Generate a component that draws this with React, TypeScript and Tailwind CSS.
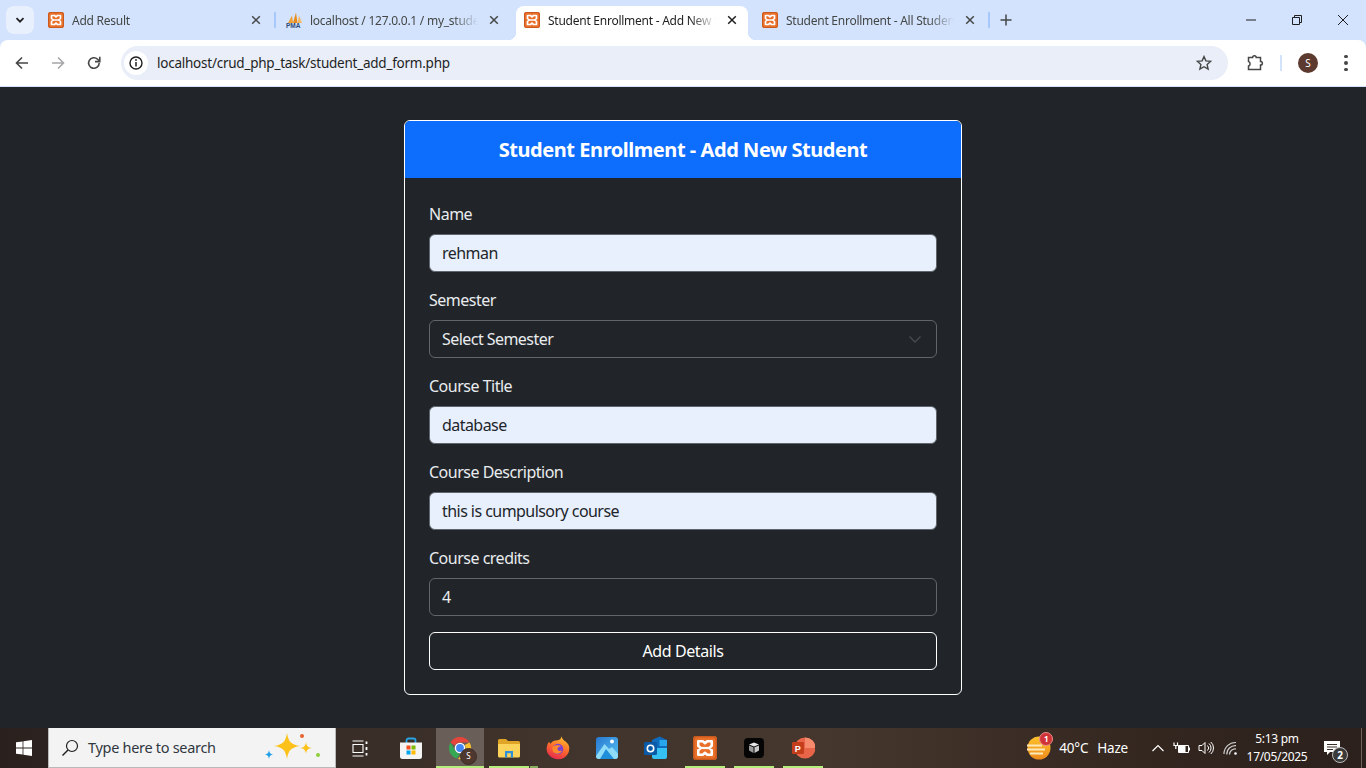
import React from "react";

const FONT = "font-['Noto_Sans','Open_Sans',sans-serif]";

function Xampp({ s = 16 }: { s?: number }) {
  return (
    <svg width={s} height={s} viewBox="0 0 16 16" className="shrink-0">
      <rect x="0" y="0" width="16" height="16" rx="2" fill="#e8702a" />
      <rect x="0.5" y="0.5" width="15" height="15" rx="2" fill="none" stroke="#c9591c" />
      <path d="M3.500 3.500H6.500L8 4.800 9.500 3.500H12.500V6.500L11 8 12.500 9.500V12.500H9.500L8 11.200 6.500 12.500H3.500V9.500L5 8 3.500 6.500Z" fill="none" stroke="#fff" strokeWidth="1.700" strokeLinejoin="round" />
      <path d="M5 8H11" stroke="#fff" strokeWidth="1.500" />
    </svg>
  );
}

function Pma() {
  return (
    <svg width="16" height="16" viewBox="0 0 16 16" className="shrink-0">
      <path d="M2 11 6 3.500 7 11Z" fill="#f0a030" />
      <path d="M7 11 10 0.500 11.500 11Z" fill="#e88a1a" />
      <path d="M11.500 11 13 3.500 16 11Z" fill="#f4b860" />
      <text x="0" y="16" fontSize="6.500" fontWeight="700" fill="#2b4a7a" fontFamily="Liberation Sans">PMA</text>
    </svg>
  );
}

function Close({ dark }: { dark?: boolean }) {
  return (
    <svg width="16" height="16" viewBox="0 0 16 16" className="shrink-0">
      <path d="M4.200 4.200 11.800 11.800M11.800 4.200 4.200 11.800" stroke={dark ? "#1f1f1f" : "#444746"} strokeWidth="1.500" fill="none" />
    </svg>
  );
}

function Tab({ icon, title, active }: { icon: React.ReactNode; title: string; active?: boolean }) {
  return (
    <div className={`relative w-[232px] h-[34px] shrink-0 flex items-center pl-2 pr-2 pb-[6px] rounded-t-lg ${active ? "bg-white" : ""}`}>
      {active && <span className="absolute left-[-8px] bottom-0 w-2 h-2 bg-[radial-gradient(circle_at_0_0,#d3e3fd_8px,#fff_8.5px)]" />}
      {active && <span className="absolute right-[-8px] bottom-0 w-2 h-2 bg-[radial-gradient(circle_at_100%_0,#d3e3fd_8px,#fff_8.5px)]" />}
      {icon}
      <span className={`ml-2 mt-[1px] w-[168px] overflow-hidden whitespace-nowrap text-[12px] leading-4 tracking-[-0.25px] [mask-image:linear-gradient(to_right,#000_85%,transparent_100%)] ${active ? "text-[#1f1f1f]" : "text-[#444746]"}`}>{title}</span>
      <span className="ml-auto"><Close dark={active} /></span>
    </div>
  );
}

function Sep({ hidden }: { hidden?: boolean }) {
  return (
    <div className="w-[6px] h-[34px] shrink-0 flex items-center justify-center pb-[6px]">
      {!hidden && <span className="w-[2px] h-4 bg-[#a8c7fa]" />}
    </div>
  );
}

function TabStrip() {
  return (
    <div className="h-10 bg-[#d3e3fd] flex items-end shrink-0">
      <div className="w-[40px] h-[34px] shrink-0 flex items-start pl-[6px]">
        <div className="w-[28px] h-[28px] rounded-lg bg-[#e8f0fe] flex items-center justify-center">
          <svg width="12" height="12" viewBox="0 0 12 12"><path d="M2.500 4.200 6 7.700 9.500 4.200" stroke="#1f1f1f" strokeWidth="1.700" fill="none" /></svg>
        </div>
      </div>
      <Tab icon={<Xampp />} title="Add Result" />
      <Sep />
      <Tab icon={<Pma />} title="localhost / 127.0.0.1 / my_student_db" />
      <Sep hidden />
      <Tab icon={<Xampp />} title="Student Enrollment - Add New Student" active />
      <Sep hidden />
      <Tab icon={<Xampp />} title="Student Enrollment - All Students" />
      <Sep />
      <div className="h-[34px] w-[20px] flex items-center justify-end shrink-0 pb-[6px]">
        <svg width="12" height="12" viewBox="0 0 12 12"><path d="M6 .5V11.500M.5 6H11.500" stroke="#444746" strokeWidth="1.500" /></svg>
      </div>
      <div className="ml-auto h-10 flex items-center self-start">
        <div className="w-[46px] flex justify-center"><svg width="12" height="12" viewBox="0 0 12 12"><path d="M1 6H11" stroke="#1f1f1f" /></svg></div>
        <div className="w-[46px] flex justify-center"><svg width="12" height="12" viewBox="0 0 12 12"><path d="M1.500 3.500H8.500V10.500H1.500ZM3.500 3.500V1.500H10.500V8.500H8.500" stroke="#1f1f1f" fill="none" /></svg></div>
        <div className="w-[46px] flex justify-center"><svg width="12" height="12" viewBox="0 0 12 12"><path d="M1 1 11 11M11 1 1 11" stroke="#1f1f1f" /></svg></div>
      </div>
    </div>
  );
}

function Toolbar() {
  return (
    <div className="h-[47px] bg-[#d3e3fd] shrink-0">
      <div className="h-[46px] bg-white rounded-t-lg flex items-center">
        <div className="w-[44px] flex justify-center">
          <svg width="16" height="16" viewBox="0 0 16 16"><path d="M14 8H2.500M8 2.500 2.500 8 8 13.500" stroke="#444746" strokeWidth="1.600" fill="none" /></svg>
        </div>
        <div className="w-[28px] flex justify-center">
          <svg width="16" height="16" viewBox="0 0 16 16"><path d="M2 8H13.500M8 2.500 13.500 8 8 13.500" stroke="#a5a7a8" strokeWidth="1.600" fill="none" /></svg>
        </div>
        <div className="w-[44px] flex justify-center">
          <svg width="16" height="16" viewBox="0 0 16 16"><path d="M13.200 8A5.300 5.300 0 1 1 11.600 4.200L13.400 6" stroke="#444746" strokeWidth="1.600" fill="none" /><path d="M13.800 1.800V6.600H9" stroke="#444746" strokeWidth="1.600" fill="none" /></svg>
        </div>
        <div className="ml-[5px] w-[1107px] h-[34px] rounded-full bg-[#e9eef8] flex items-center">
          <div className="ml-[3px] w-[24px] h-[24px] rounded-full bg-white flex items-center justify-center">
            <svg width="16" height="16" viewBox="0 0 16 16"><circle cx="8" cy="8" r="6" stroke="#1f1f1f" strokeWidth="1.400" fill="none" /><path d="M8 7V11.400" stroke="#1f1f1f" strokeWidth="1.500" /><circle cx="8" cy="5" r=".9" fill="#1f1f1f" /></svg>
          </div>
          <span className="ml-[9px] text-[13.5px] text-[#1f1f1f] tracking-[-0.24px]">localhost/crud_php_task/student_add_form.php</span>
          <svg className="ml-auto mr-[16px]" width="16" height="16" viewBox="0 0 16 16"><path d="M8 1.600 9.900 5.900 14.600 6.400 11.100 9.500 12.100 14.100 8 11.700 3.900 14.100 4.900 9.500 1.400 6.400 6.100 5.900Z" stroke="#444746" strokeWidth="1.400" fill="none" /></svg>
        </div>
        <div className="ml-[17px] w-[20px] flex justify-center">
          <svg width="18" height="18" viewBox="0 0 18 18"><path d="M2.500 3.500H6.600C6.600 1 10.200 1 10.200 3.500H14.500V7.400C17 7.400 17 11 14.500 11V15.500H2.500V12C4.600 11.600 4.600 7.800 2.500 7.400Z" stroke="#444746" strokeWidth="1.500" fill="none" /></svg>
        </div>
        <span className="ml-[15px] w-[2px] h-4 bg-[#d3e3fd]" />
        <div className="ml-[16px] w-[20px] h-[20px] rounded-full bg-[#5d3a2f] text-white text-[10px] flex items-center justify-center">S</div>
        <div className="ml-[26px] w-[4px] flex flex-col gap-[3px]">
          <span className="w-[3.5px] h-[3.5px] rounded-full bg-[#444746]" />
          <span className="w-[3.5px] h-[3.5px] rounded-full bg-[#444746]" />
          <span className="w-[3.5px] h-[3.5px] rounded-full bg-[#444746]" />
        </div>
      </div>
    </div>
  );
}

function Field({ label, value, filled, select }: { label: string; value: string; filled?: boolean; select?: boolean }) {
  return (
    <div className="mb-4">
      <div className="h-6 mb-2 text-[16px] leading-6 text-[#e9ecef] tracking-[-0.5px]">{label}</div>
      <div className={`h-[38px] rounded-md border border-[#60666c] px-3 flex items-center text-[16px] tracking-[-0.55px] ${filled ? "bg-[#e8f0fe] text-[#212529]" : "text-[#e9ecef]"}`}>
        <span>{value}</span>
        {select && (
          <svg className="ml-auto mr-[1px]" width="16" height="16" viewBox="0 0 16 16"><path d="M2.500 5.500 8 11l5.500-5.500" stroke="#454a50" strokeWidth="1.400" fill="none" /></svg>
        )}
      </div>
    </div>
  );
}

function Card() {
  return (
    <div className="flex-1 min-h-0 bg-[#212529] flex justify-center pt-[33px]">
      <div className="w-[558px] h-[575px] border border-white rounded-md overflow-hidden">
        <div className="h-[57px] bg-[#0d6efd] flex items-center justify-center text-white text-[20px] font-bold tracking-[-0.45px]">Student Enrollment - Add New Student</div>
        <div className="p-6">
          <Field label="Name" value="rehman" filled />
          <Field label="Semester" value="Select Semester" select />
          <Field label="Course Title" value="database" filled />
          <Field label="Course Description" value="this is cumpulsory course" filled />
          <Field label="Course credits" value="4" />
          <div className="h-[38px] rounded-md border border-white flex items-center justify-center text-[16px] text-white tracking-[-0.4px]">Add Details</div>
        </div>
      </div>
    </div>
  );
}

function ChromeIcon() {
  return (
    <div className="relative w-6 h-6">
      <svg width="24" height="24" viewBox="0 0 24 24">
        <path d="M12 1A11 11 0 0 1 21.500 6.500H12A5.500 5.500 0 0 0 7 9.500L2.500 6.500A11 11 0 0 1 12 1Z" fill="#e5453a" />
        <path d="M2.500 6.500 7.200 14.600A5.500 5.500 0 0 0 12 17.500L9 22.600A11 11 0 0 1 2.500 6.500Z" fill="#36a853" />
        <path d="M21.500 6.500A11 11 0 0 1 10 23L16.800 14.600A5.500 5.500 0 0 0 16.800 9Z" fill="#fbc02d" />
        <circle cx="12" cy="12" r="4.600" fill="#4285f4" stroke="#fff" strokeWidth="1.400" />
      </svg>
      <span className="absolute right-[-5px] bottom-[-5px] w-[17px] h-[17px] rounded-full bg-[#4e372e] border border-[#3a2e28] text-white text-[8px] flex items-center justify-center">S</span>
    </div>
  );
}

function Files() {
  return (
    <svg width="24" height="24" viewBox="0 0 24 24">
      <path d="M1 4.500A1.500 1.500 0 0 1 2.500 3H9L11 5H21.500A1.500 1.500 0 0 1 23 6.500V9H1Z" fill="#e0a526" />
      <path d="M1 8H23V20A1.500 1.500 0 0 1 21.500 21.500H2.500A1.500 1.500 0 0 1 1 20Z" fill="#fcd45c" />
      <path d="M8 21.500V15H16V21.500H13.800V17.200H10.200V21.500Z" fill="#2f8fd8" />
    </svg>
  );
}

function Firefox() {
  return (
    <svg width="24" height="24" viewBox="0 0 24 24">
      <defs>
        <linearGradient id="ff" x1="0.700" y1="0" x2="0.300" y2="1"><stop offset="0" stopColor="#ffc12f" /><stop offset=".5" stopColor="#ff6b2c" /><stop offset="1" stopColor="#e5264f" /></linearGradient>
      </defs>
      <path d="M15.500 .3C16 3 18 4.500 19.600 5.600 22.800 8 23.500 11 23.200 13.500A11.300 10.500 0 1 1 1.200 9.500C1.500 8 2.500 6.500 3.200 5.800 3.500 6.800 4 7.500 4.600 7.800 6 5.500 8 4.500 9.500 4.500 12 4.500 15 4 15.500 .3Z" fill="url(#ff)" />
      <circle cx="12" cy="13" r="5.200" fill="#7b3fd1" />
      <path d="M6.500 11C9 8.500 13 9 15.500 10.500 13.500 10.500 11.500 11 11.500 13 11.500 15 14 15.500 16 14.500 14.500 18.500 9.500 18.500 7.500 16 6.500 15 6.200 13 6.500 11Z" fill="#ff8a2c" />
    </svg>
  );
}

function Photos() {
  return (
    <svg width="24" height="24" viewBox="0 0 24 24">
      <defs>
        <linearGradient id="ph" x1="0" y1="0" x2="1" y2="1"><stop offset="0" stopColor="#2878d0" /><stop offset="1" stopColor="#56c1f2" /></linearGradient>
      </defs>
      <rect x="1" y="1" width="22" height="22" rx="3" fill="url(#ph)" />
      <circle cx="17" cy="5.500" r="2" fill="#fff" />
      <path d="M1 20 9.500 8 14 13 17 11 23 18V20A3 3 0 0 1 20 23H4A3 3 0 0 1 1 20Z" fill="#8fdcf8" />
      <path d="M5 23 11 13 19 23Z" fill="#1f8fdc" />
    </svg>
  );
}

function Outlook() {
  return (
    <svg width="24" height="24" viewBox="0 0 24 24">
      <path d="M8 4 15.500 .5 23 4V12H8Z" fill="#0f6cbd" />
      <path d="M15.500 4H23V10H15.500Z" fill="#28a8ea" />
      <path d="M8 12H23V21A2 2 0 0 1 21 23H10A2 2 0 0 1 8 21Z" fill="#35c1f1" />
      <rect x="0" y="6" width="13" height="13" rx="1.500" fill="#0a5aa8" />
      <circle cx="6.500" cy="12.500" r="3.200" fill="none" stroke="#fff" strokeWidth="1.600" />
    </svg>
  );
}

function Ppt() {
  return (
    <svg width="24" height="24" viewBox="0 0 24 24">
      <circle cx="14" cy="12" r="10.500" fill="#e9654a" />
      <path d="M14 1.500A10.500 10.500 0 0 1 24.500 12H14Z" fill="#f58a6c" />
      <rect x="1" y="6" width="12" height="12" rx="1.200" fill="#c43e1c" />
      <text x="3.800" y="15.500" fontSize="9" fontWeight="700" fill="#fff" fontFamily="Liberation Sans">P</text>
    </svg>
  );
}

function BlackBox() {
  return (
    <svg width="20" height="20" viewBox="0 0 20 20">
      <rect width="20" height="20" rx="4" fill="#050505" />
      <path d="M5 6.500 10 4.500 15 6.500 10 8.500Z" fill="#e8e8e8" />
      <path d="M5 7.500 9.500 9.300V15L5 12.500Z" fill="#9a9a9a" />
      <path d="M15 7.500 10.500 9.300V15L15 12.500Z" fill="#c8c8c8" />
    </svg>
  );
}

function Store() {
  return (
    <svg width="24" height="24" viewBox="0 0 24 24">
      <path d="M7.500 7V4.500A2 2 0 0 1 9.500 2.500H14.500A2 2 0 0 1 16.500 4.500V7" fill="none" stroke="#27a5e6" strokeWidth="1.800" />
      <path d="M1 6.500H23V20.500A2.500 2.500 0 0 1 20.500 23H3.500A2.500 2.500 0 0 1 1 20.500Z" fill="#f4f4f4" />
      <rect x="7.500" y="9.500" width="4" height="4" fill="#f25022" />
      <rect x="12.500" y="9.500" width="4" height="4" fill="#7fba00" />
      <rect x="7.500" y="14.500" width="4" height="4" fill="#00a4ef" />
      <rect x="12.500" y="14.500" width="4" height="4" fill="#ffb900" />
    </svg>
  );
}

function AppSlot({ children, active, line, extra }: { children: React.ReactNode; active?: boolean; line?: boolean; extra?: boolean }) {
  return (
    <div className={`relative w-[48px] mr-[1px] h-10 shrink-0 flex items-center justify-center ${active ? "bg-[#6a5f58]" : ""}`}>
      <div className="mt-[-1px]">{children}</div>
      {line && <span className="absolute left-1 right-1 bottom-0 h-[2px] bg-[#b5ee7c]" />}
      {active && <span className="absolute left-0 right-0 bottom-0 h-[2px] bg-[#b5ee7c]" />}
      {extra && <span className="absolute right-[-5px] bottom-0 w-2 h-[2px] bg-[#86ad60]" />}
    </div>
  );
}

function Taskbar() {
  return (
    <div className="h-10 shrink-0 flex items-center text-white bg-[linear-gradient(90deg,#2a211e_0%,#40342c_40%,#45372d_60%,#33261f_85%,#2b201c_100%)] font-['Noto_Sans',sans-serif]">
      <div className="w-12 h-10 flex items-center justify-center">
        <svg width="16" height="16" viewBox="0 0 16 16" fill="#fff"><path d="M0 2.300 6.600 1.400V7.600H0ZM7.400 1.300 16 0V7.600H7.400ZM0 8.400H6.600V14.600L0 13.700ZM7.400 8.400H16V16L7.400 14.700Z" /></svg>
      </div>
      <div className="w-[288px] h-10 bg-[#f3f3f3] border border-[#b9b9b9] border-t-0 flex items-center relative">
        <svg className="ml-[12px]" width="18" height="18" viewBox="0 0 18 18"><circle cx="11" cy="7" r="5.500" stroke="#1f1f1f" strokeWidth="1.200" fill="none" /><path d="M7 11 1.500 16.500" stroke="#1f1f1f" strokeWidth="1.400" /></svg>
        <span className="ml-[9px] text-[14.5px] text-[#30383f] tracking-[-0.3px]">Type here to search</span>
        <svg className="ml-auto mr-[11px]" width="62" height="36" viewBox="0 0 62 36">
          <path d="M25 3C26.500 12 29 14.500 38 16 29 17.500 26.500 20 25 29 23.500 20 21 17.500 12 16 21 14.500 23.500 12 25 3Z" fill="#fcc21b" />
          <path d="M44 12C44.500 16 46 17.500 50 18 46 18.500 44.500 20 44 24 43.500 20 42 18.500 38 18 42 17.500 43.500 16 44 12Z" fill="#fcc21b" />
          <path d="M7 20C7.400 23 8.500 24 11 24.500 8.500 25 7.400 26 7 29 6.600 26 5.500 25 3 24.500 5.500 24 6.600 23 7 20Z" fill="#1f9fe8" />
          <circle cx="40" cy="6" r="2" fill="#e8622c" />
          <circle cx="56" cy="25" r="2" fill="#8fcf3c" />
        </svg>
      </div>
      <div className="w-12 flex justify-center">
        <svg width="17" height="17" viewBox="0 0 17 17" fill="none" stroke="#fff" strokeWidth="1.100"><path d="M.5 1H11.500M.5 16H11.500M1 4.500H11V12.500H1Z" /><path d="M14.500 1.500V4M14.500 7V10M14.500 13V15.500" strokeWidth="1.800" /></svg>
      </div>
      <div className="w-[3px]" />
      <AppSlot><Store /></AppSlot>
      <AppSlot active><ChromeIcon /></AppSlot>
      <AppSlot line extra><Files /></AppSlot>
      <AppSlot><Firefox /></AppSlot>
      <AppSlot><Photos /></AppSlot>
      <AppSlot><Outlook /></AppSlot>
      <AppSlot line><Xampp s={24} /></AppSlot>
      <AppSlot line><BlackBox /></AppSlot>
      <AppSlot line><Ppt /></AppSlot>
      <div className="ml-auto flex items-center h-10">
        <div className="relative mr-2 w-[24px] h-[24px]">
          <svg width="24" height="24" viewBox="0 0 24 24">
            <defs><linearGradient id="sun" x1="0" y1="0" x2="0" y2="1"><stop offset="0" stopColor="#fdc32b" /><stop offset="1" stopColor="#ee8a1d" /></linearGradient></defs>
            <circle cx="12" cy="12" r="11.500" fill="url(#sun)" />
            <path d="M0 9.500H15M0 13.500H18M3 17.500H16" stroke="#fde9b8" strokeWidth="1.800" />
          </svg>
          <span className="absolute right-[-2px] top-[-4px] w-[14px] h-[14px] rounded-full bg-[#d13438] border border-[#e9908a] text-white text-[8px] leading-3 text-center font-bold">1</span>
        </div>
        <span className="text-[13.5px] tracking-[-0.2px]">40°C</span>
        <span className="ml-[9px] text-[13.5px] tracking-[-0.2px]">Haze</span>
        <svg className="ml-[23px]" width="14" height="14" viewBox="0 0 14 14"><path d="M1.500 10 7 4.500 12.500 10" stroke="#fff" strokeWidth="1.200" fill="none" /></svg>
        <svg className="ml-[8px]" width="17" height="14" viewBox="0 0 17 14" fill="none" stroke="#fff"><path d="M5.500 4.500H15.500V11.500H5.500Z" /><rect x="6" y="5" width="6.500" height="6" fill="#fff" stroke="none" /><rect x="15.500" y="6.500" width="1.500" height="3" fill="#fff" stroke="none" /><path d="M1 1.500V4.500H4.500V1.500M2.800 4.500V8" strokeWidth="1.200" /></svg>
        <svg className="ml-[8px]" width="16" height="16" viewBox="0 0 16 16" fill="none" stroke="#fff"><path d="M1 5.500H4L7 2.500V13.500L4 10.500H1Z" /><path d="M9.500 5.500A3.500 3.500 0 0 1 9.500 10.500M11 3.500A6 6 0 0 1 11 12.500M12.800 2A8 8 0 0 1 12.800 14" /></svg>
        <svg className="ml-[9px]" width="15" height="15" viewBox="0 0 15 15" fill="none" stroke="#cfcfcf" strokeWidth="1.200"><path d="M1 13A11.500 11.500 0 0 1 13 1.500M3.800 13.500A8.500 8.500 0 0 1 13 4.700M6.500 13.500A5.700 5.700 0 0 1 13 8" /><circle cx="12.500" cy="12.500" r="1.300" fill="#fff" stroke="none" /></svg>
        <div className="ml-[3px] w-[72px] flex flex-col items-center text-[12px] leading-[18px] tracking-[-0.3px]">
          <span>5:13 pm</span>
          <span>17/05/2025</span>
        </div>
        <div className="relative ml-[11px] w-[18px] h-[17px]">
          <svg width="16" height="16" viewBox="0 0 16 16"><path d="M0 1H16V12H6L3 15V12H0Z" fill="#fff" /><path d="M3 4.500H13M3 7H13M3 9.500H9" stroke="#3a2e28" /></svg>
          <span className="absolute right-[-6px] bottom-[-6px] w-4 h-4 rounded-full bg-[#3a3a3a] border border-[#bbb] text-[10px] leading-[14px] text-center font-bold">2</span>
        </div>
        <span className="ml-[19px] mr-[4px] w-[1px] h-10 bg-[#6e625b]" />
      </div>
    </div>
  );
}

export default function App() {
  return (
    <div className={`w-[1366px] h-[768px] overflow-hidden flex flex-col ${FONT}`}>
      <TabStrip />
      <Toolbar />
      <Card />
      <Taskbar />
    </div>
  );
}
